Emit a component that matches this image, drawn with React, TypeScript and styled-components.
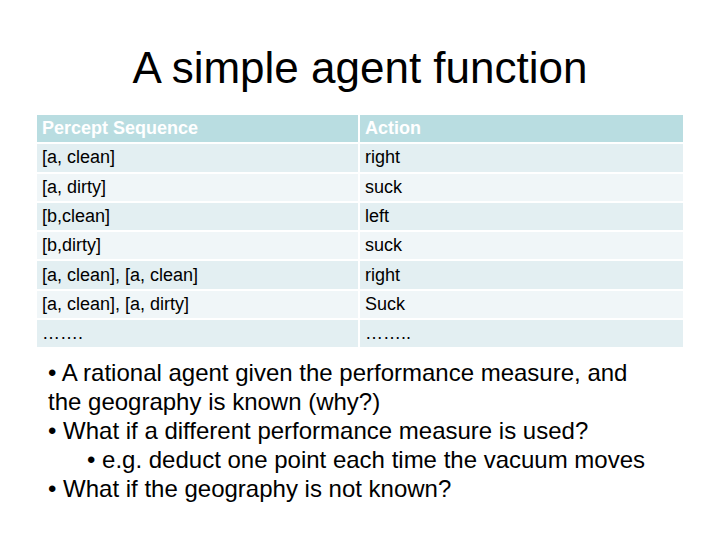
import { createGlobalStyle } from 'styled-components';
import styled from 'styled-components';

const GlobalStyle = createGlobalStyle`
  html, body {
    margin: 0;
    padding: 0;
    background: #ffffff;
  }
  body {
    font-family: "Liberation Sans", Arial, sans-serif;
    color: #000;
  }
`;

const Slide = styled.div`
  width: 720px;
  height: 540px;
  overflow: hidden;
  display: flex;
  flex-direction: column;
`;

const Title = styled.h1`
  margin: 43px 0 0;
  height: 50px;
  font-size: 44px;
  line-height: 50px;
  font-weight: normal;
  text-align: center;
`;

const Table = styled.div`
  margin: 22px 37px 0;
  display: grid;
  grid-template-columns: 321px 1fr;
  grid-auto-rows: 27.3px;
  gap: 2px;
`;

const Cell = styled.div<{ $header?: boolean; $odd?: boolean }>`
  display: flex;
  align-items: center;
  padding-left: 5px;
  font-size: 18px;
  font-weight: ${p => (p.$header ? 'bold' : 'normal')};
  color: ${p => (p.$header ? '#ffffff' : '#000000')};
  background-color: ${p => (p.$header ? '#b9dde1' : p.$odd ? '#e3eff2' : '#f0f6f8')};
`;

const Notes = styled.div`
  margin: 11px 0 0 48px;
  font-size: 24px;
  line-height: 29px;
`;

const Line = styled.div<{ $indent?: boolean }>`
  padding-left: ${p => (p.$indent ? '39px' : '0')};
  white-space: nowrap;
`;

const rows: [string, string][] = [
  ['[a, clean]', 'right'],
  ['[a, dirty]', 'suck'],
  ['[b,clean]', 'left'],
  ['[b,dirty]', 'suck'],
  ['[a, clean], [a, clean]', 'right'],
  ['[a, clean], [a, dirty]', 'Suck'],
  ['…….', '……..'],
];

export default function App() {
  return (
    <Slide>
      <GlobalStyle />
      <Title>A simple agent function</Title>
      <Table>
        <Cell $header>Percept Sequence</Cell>
        <Cell $header>Action</Cell>
        {rows.map(([percept, action], i) => [
          <Cell key={`p${i}`} $odd={i % 2 === 0}>{percept}</Cell>,
          <Cell key={`a${i}`} $odd={i % 2 === 0}>{action}</Cell>,
        ])}
      </Table>
      <Notes>
        <Line>• A rational agent given the performance measure, and</Line>
        <Line>the geography is known (why?)</Line>
        <Line>• What if a different performance measure is used?</Line>
        <Line $indent>• e.g. deduct one point each time the vacuum moves</Line>
        <Line>• What if the geography is not known?</Line>
      </Notes>
    </Slide>
  );
}
